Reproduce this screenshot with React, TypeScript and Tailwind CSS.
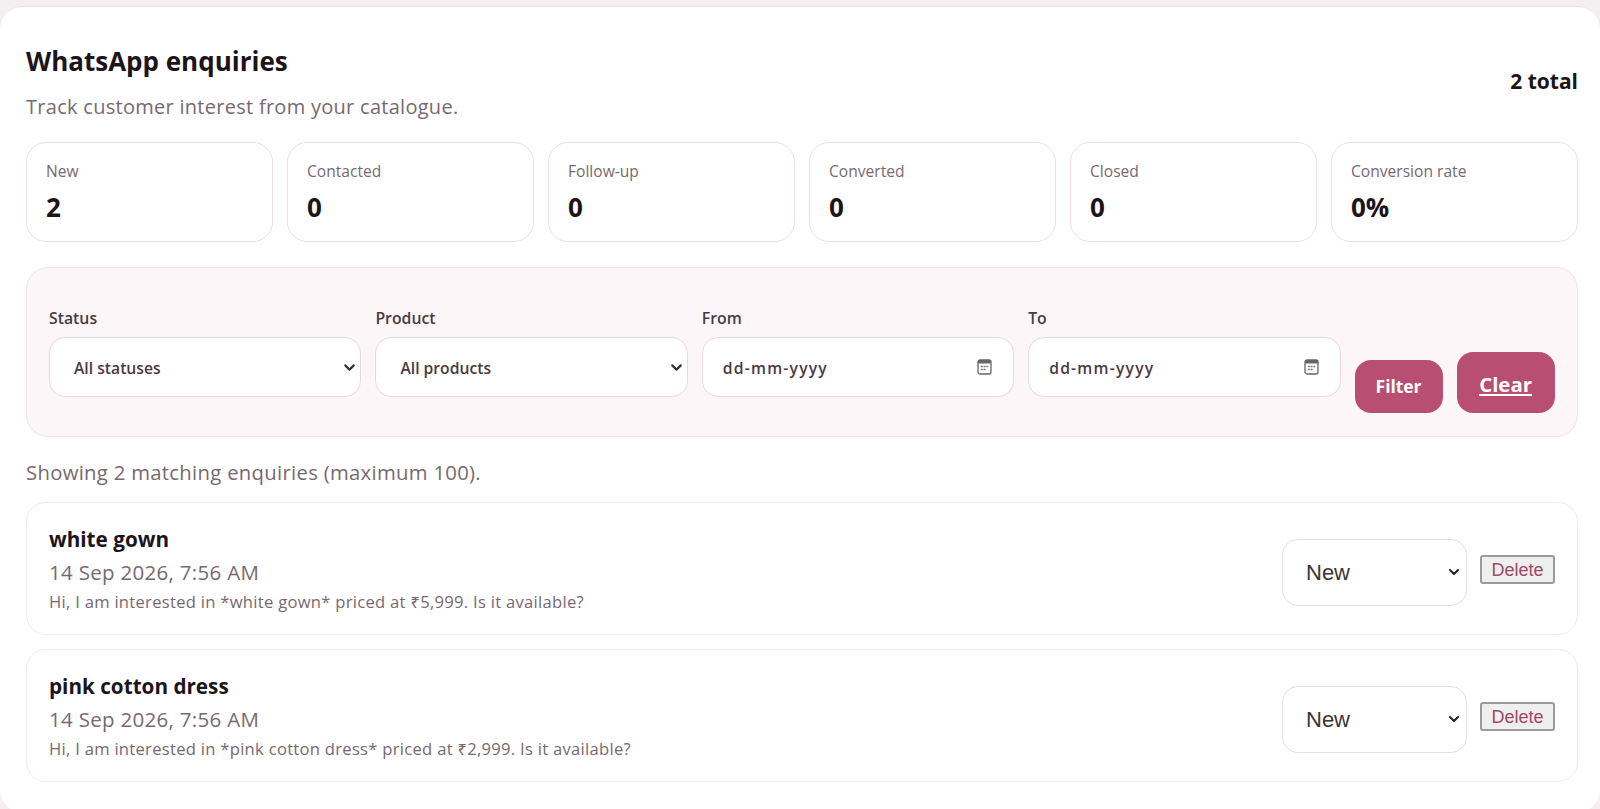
import { ReactNode } from "react";
import { ChevronDown } from "lucide-react";

const stats = [
  { label: "New", value: "2" },
  { label: "Contacted", value: "0" },
  { label: "Follow-up", value: "0" },
  { label: "Converted", value: "0" },
  { label: "Closed", value: "0" },
  { label: "Conversion rate", value: "0%" },
];

const enquiries = [
  {
    title: "white gown",
    date: "14 Sep 2026, 7:56 AM",
    message: "Hi, I am interested in *white gown* priced at ₹5,999. Is it available?",
  },
  {
    title: "pink cotton dress",
    date: "14 Sep 2026, 7:56 AM",
    message: "Hi, I am interested in *pink cotton dress* priced at ₹2,999. Is it available?",
  },
];

function CalendarIcon() {
  return (
    <svg width="15" height="16" viewBox="0 0 15 16" fill="none" className="shrink-0">
      <rect x="1" y="1" width="13" height="14" rx="2" stroke="#666" strokeWidth="1.3" />
      <rect x="1" y="1" width="13" height="3.4" rx="1" fill="#666" />
      <path d="M3.8 6.8h2v1.5h-2zM6.6 6.8h2v1.5h-2zM9.4 6.8h1.8v1.5h-1.8zM3.8 9.8h2v1.5h-2zM6.6 9.8h2v1.5h-2z" fill="#777" />
    </svg>
  );
}

function Field({ label, children }: { label: string; children: ReactNode }) {
  return (
    <div className="mb-[16px] w-[312.4px]">
      <label className="mb-[9px] block text-[15.8px] leading-[20px] font-semibold text-[#4a3a42]">{label}</label>
      {children}
    </div>
  );
}

function FilterSelect({ value }: { value: string }) {
  return (
    <div className="relative">
      <select className="h-[60px] w-full appearance-none rounded-[16px] border border-[#e6dadf] bg-white pt-[3px] pl-[24px] text-[15.7px] font-semibold text-[#4a3a42]">
        <option>{value}</option>
      </select>
      <ChevronDown size={17} strokeWidth={3} className="pointer-events-none absolute top-[22px] right-[3px] text-[#333]" />
    </div>
  );
}

function DateBox() {
  return (
    <div className="flex h-[60px] items-center justify-between rounded-[16px] border border-[#e6dadf] bg-white pr-[21px] pl-[20px] text-[15.7px] font-semibold text-[#4a3a42]">
      <span className="pt-[3px] tracking-[1.2px]">dd-mm-yyyy</span>
      <CalendarIcon />
    </div>
  );
}

export default function App() {
  return (
    <div className="h-[809px] overflow-hidden bg-[#f3eef0] pt-[6px] font-['Open_Sans','Noto_Sans',sans-serif]">
      <div className="h-[806px] rounded-[22px] border-t border-[#ebe4e7] bg-white pt-[34px] pr-[22px] pl-[26px]">
        {/* Header */}
        <div className="flex items-start justify-between">
          <div>
            <h1 className="text-[26px] leading-[40px] font-bold text-[#1c1418]">WhatsApp enquiries</h1>
            <p className="mt-[13px] text-[20px] leading-[26px] tracking-[0.28px] text-[#77696f]">Track customer interest from your catalogue.</p>
          </div>
          <div className="pt-[26px] text-[21px] leading-[28px] font-bold text-[#1c1418]">2 total</div>
        </div>

        {/* Stat cards */}
        <div className="mt-[22px] grid grid-cols-6 gap-[14px]">
          {stats.map((s) => (
            <div key={s.label} className="h-[100px] rounded-[20px] border border-[#e9e1e5] bg-white pt-[17px] pl-[19px]">
              <div className="text-[15.6px] leading-[22px] text-[#77696f]">{s.label}</div>
              <div className="mt-[7px] text-[26px] leading-[36px] font-bold text-[#1c1418]">{s.value}</div>
            </div>
          ))}
        </div>

        {/* Filters */}
        <div className="mt-[25px] flex h-[170px] items-end gap-[14px] rounded-[22px] border border-[#f0e4e8] bg-[#fdf6f9] pr-[22px] pb-[23px] pl-[22px]">
          <Field label="Status">
            <FilterSelect value="All statuses" />
          </Field>
          <Field label="Product">
            <FilterSelect value="All products" />
          </Field>
          <Field label="From">
            <DateBox />
          </Field>
          <Field label="To">
            <DateBox />
          </Field>
          <button className="h-[53px] w-[88px] rounded-[16px] bg-[#b84f72] text-[17.4px] font-bold text-white">Filter</button>
          <a className="flex h-[61px] w-[98px] items-center justify-center rounded-[16px] bg-[#b84f72] pt-[3px] text-[20.4px] font-bold text-white underline">Clear</a>
        </div>

        <p className="mt-[21px] text-[20.3px] leading-[28px] tracking-[0.3px] text-[#77696f]">Showing 2 matching enquiries (maximum 100).</p>

        {/* Enquiry list */}
        <div className="mt-[16px] flex flex-col gap-[14px]">
          {enquiries.map((e) => (
            <div key={e.title} className="flex h-[133px] items-center justify-between rounded-[20px] border border-[#f0ebed] bg-white pr-[22px] pl-[22px]">
              <div className="mt-[1px]">
                <div className="text-[20.7px] leading-[28px] font-bold text-[#1c1418]">{e.title}</div>
                <div className="mt-[5px] text-[20.5px] leading-[28px] tracking-[0.3px] text-[#77696f]">{e.date}</div>
                <div className="mt-[4px] text-[16.6px] leading-[24px] tracking-[0.28px] text-[#77696f]">{e.message}</div>
              </div>
              <div className="mt-[7px] flex items-center gap-[13px]">
                <div className="relative">
                  <select className="h-[67px] w-[185px] appearance-none rounded-[16px] border border-[#e3dfe1] bg-white pl-[23px] font-['Liberation_Sans',sans-serif] text-[22px] text-[#3a3438]">
                    <option>New</option>
                  </select>
                  <ChevronDown size={16} strokeWidth={3} className="pointer-events-none absolute top-[25px] right-[5px] text-[#222]" />
                </div>
                <button className="mb-[5px] h-[29px] w-[75px] rounded-[3px] border-2 border-[#9a9a9a] bg-[#efefef] font-['Liberation_Sans',sans-serif] text-[18px] leading-none text-[#9c4a66]">Delete</button>
              </div>
            </div>
          ))}
        </div>
      </div>
    </div>
  );
}
